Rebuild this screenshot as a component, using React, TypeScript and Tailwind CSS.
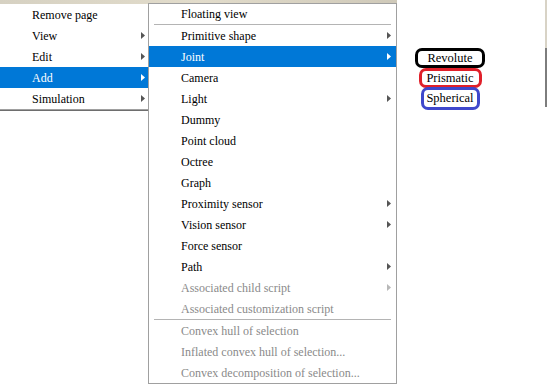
import React from "react";

type Item = {
  label: string;
  sub?: boolean;
  active?: boolean;
  disabled?: boolean;
  sepBefore?: boolean;
};

const mainItems: Item[] = [
  { label: "Remove page" },
  { label: "View", sub: true },
  { label: "Edit", sub: true },
  { label: "Add", sub: true, active: true },
  { label: "Simulation", sub: true },
];

const addItems: Item[] = [
  { label: "Floating view" },
  { label: "Primitive shape", sub: true, sepBefore: true },
  { label: "Joint", sub: true, active: true },
  { label: "Camera" },
  { label: "Light", sub: true },
  { label: "Dummy" },
  { label: "Point cloud" },
  { label: "Octree" },
  { label: "Graph" },
  { label: "Proximity sensor", sub: true },
  { label: "Vision sensor", sub: true },
  { label: "Force sensor" },
  { label: "Path", sub: true },
  { label: "Associated child script", sub: true, disabled: true },
  { label: "Associated customization script", disabled: true },
  { label: "Convex hull of selection", disabled: true, sepBefore: true },
  { label: "Inflated convex hull of selection...", disabled: true },
  { label: "Convex decomposition of selection...", disabled: true },
];

function Arrow({ color }: { color: string }) {
  return (
    <svg width="4" height="7" viewBox="0 0 4 7" className="shrink-0">
      <path d="M0 0 L4 3.5 L0 7 Z" fill={color} />
    </svg>
  );
}

function Row({ item, arrowRight, first }: { item: Item; arrowRight: string; first?: boolean }) {
  const color = item.active ? "text-white" : item.disabled ? "text-[#8a8a8a]" : "text-black";
  const arrow = item.active ? "#ffffff" : item.disabled ? "#b8b8b8" : "#555555";
  return (
    <div
      className={`flex items-center justify-between pl-[32px] ${first ? "h-[20px]" : "h-[21px]"} ${arrowRight} ${
        item.active ? "bg-[#0078d7]" : ""
      } ${color}`}
    >
      <span className="leading-none whitespace-nowrap">{item.label}</span>
      {item.sub && <Arrow color={arrow} />}
    </div>
  );
}

function Label({ text, border, size }: { text: string; border: string; size: string }) {
  return (
    <div
      className={`flex items-center justify-center rounded-[7px] border-[3px] bg-white text-[12.5px] leading-none text-black ${border} ${size}`}
    >
      {text}
    </div>
  );
}

export default function App() {
  return (
    <div
      className="relative w-[547px] h-[385px] overflow-hidden bg-white"
      style={{ fontFamily: '"Liberation Serif", "Times New Roman", serif' }}
    >
      {/* strip of the window behind the menus */}
      <div className="absolute left-0 top-0 w-[397px] h-[4px] bg-gradient-to-r from-[#d6d1c2] via-[#e2dccb] to-[#cfc9b9]" />
      <div className="absolute right-0 top-0 flex flex-col w-[2px]">
        <div className="h-[48px] bg-[#d8d3c6]" />
        <div className="h-[59px] bg-[#7d7d7d]" />
      </div>

      {/* context menu and its Add submenu */}
      <div className="absolute left-0 top-[3px] flex items-start text-[12px]">
        <div className="mt-px w-[148px] bg-white border-b border-[#a0a0a0] shadow-[0_1px_0_#6e6e6e]">
          {mainItems.map((it) => (
            <Row key={it.label} item={it} arrowRight="pr-[3px]" />
          ))}
        </div>

        <div className="w-[249px] h-[381px] bg-white border border-[#a0a0a0]">
          {addItems.map((it, i) => (
            <React.Fragment key={it.label}>
              {it.sepBefore && <div className="h-px mx-[5px] bg-[#b4b4b4]" />}
              <Row item={it} arrowRight="pr-[5px]" first={i === 0} />
            </React.Fragment>
          ))}
        </div>
      </div>

      {/* joint type annotations */}
      <div className="absolute left-[415px] top-[48px] w-[70px] flex flex-col items-center">
        <Label text="Revolute" border="border-black" size="w-[70px] h-[20px]" />
        <Label text="Prismatic" border="border-[#e0202a]" size="w-[63px] h-[20px]" />
        <Label text="Spherical" border="border-[#3f48cc] -mt-px" size="w-[59px] h-[23px]" />
      </div>
    </div>
  );
}
